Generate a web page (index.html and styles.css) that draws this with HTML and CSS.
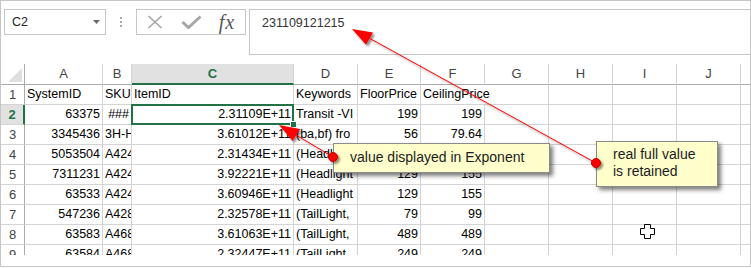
FILE: index.html
```html
<!DOCTYPE html>
<html lang="en">
<head>
  <meta charset="UTF-8" />
  <title>Exponent display</title>
  <link rel="stylesheet" href="styles.css">
</head>
<body>

  <div class="window">
    <div class="toolbar">
      <div class="namebox">
        <span>C2</span>
        <svg width="7" height="4" viewBox="0 0 7 4"><polygon points="0,0 7,0 3.5,4" fill="#6a6a6a"/></svg>
      </div>
      <div class="grip">
        <svg width="2" height="10" viewBox="0 0 2 10">
          <rect x="0" y="0" width="2" height="2" fill="#a8a8a8"/>
          <rect x="0" y="4" width="2" height="2" fill="#a8a8a8"/>
          <rect x="0" y="8" width="2" height="2" fill="#a8a8a8"/>
        </svg>
      </div>
      <div class="fxbtns">
        <div class="slot">
          <svg width="16" height="14" viewBox="0 0 16 14"><path d="M1.5 1 L14.5 13 M14.5 1 L1.5 13" stroke="#a6a6a6" stroke-width="1.7" fill="none"/></svg>
        </div>
        <div class="slot">
          <svg width="21" height="14" viewBox="0 0 21 14"><polyline points="1.5,7 7.5,12.5 19.5,1.5" stroke="#a6a6a6" stroke-width="3" fill="none"/></svg>
        </div>
        <div class="slot"><span class="fx">fx</span></div>
      </div>
      <div class="formula">231109121215</div>
    </div>

    <div class="sheet">
      <div class="corner"></div><div class="ch">A</div><div class="ch">B</div><div class="ch on">C</div><div class="ch">D</div><div class="ch">E</div><div class="ch">F</div><div class="ch">G</div><div class="ch">H</div><div class="ch">I</div><div class="ch">J</div><div class="ch"></div>

      <div class="rh">1</div><div>SystemID</div><div>SKU</div><div>ItemID</div><div>Keywords</div><div>FloorPrice</div><div class="wide">CeilingPrice</div><div></div><div></div><div></div><div></div>

      <div class="rh on">2</div><div class="n">63375</div><div class="n">###</div><div class="n sel">2.31109E+11</div><div>Transit -VI</div><div class="n">199</div><div class="n">199</div><div></div><div></div><div></div><div></div><div></div>

      <div class="rh">3</div><div class="n">3345436</div><div>3H-H</div><div class="n">3.61012E+11</div><div>(ba,bf) fro</div><div class="n">56</div><div class="n">79.64</div><div></div><div></div><div></div><div></div><div></div>

      <div class="rh">4</div><div class="n">5053504</div><div>A424</div><div class="n">2.31434E+11</div><div>(Headlight</div><div class="n">129</div><div class="n">155</div><div></div><div></div><div></div><div></div><div></div>

      <div class="rh">5</div><div class="n">7311231</div><div>A424</div><div class="n">3.92221E+11</div><div>(Headlight</div><div class="n">129</div><div class="n">155</div><div></div><div></div><div></div><div></div><div></div>

      <div class="rh">6</div><div class="n">63533</div><div>A424</div><div class="n">3.60946E+11</div><div>(Headlight</div><div class="n">129</div><div class="n">155</div><div></div><div></div><div></div><div></div><div></div>

      <div class="rh">7</div><div class="n">547236</div><div>A428</div><div class="n">2.32578E+11</div><div>(TailLight,</div><div class="n">79</div><div class="n">99</div><div></div><div></div><div></div><div></div><div></div>

      <div class="rh">8</div><div class="n">63583</div><div>A468</div><div class="n">3.61063E+11</div><div>(TailLight,</div><div class="n">489</div><div class="n">489</div><div></div><div></div><div></div><div></div><div></div>

      <div class="rh">9</div><div class="n">63584</div><div>A468</div><div class="n">2.32447E+11</div><div>(TailLight,</div><div class="n">249</div><div class="n">249</div><div></div><div></div><div></div><div></div><div></div>
    </div>

    <div class="callout callout-exp">value displayed in Exponent</div>
    <div class="callout callout-real">real full value<br>is retained</div>

    <!-- arrows, dots and mouse pointer drawn over the sheet -->
    <svg class="marks" width="751" height="267" viewBox="0 0 751 267">
      <defs>
        <filter id="shadow" filterUnits="userSpaceOnUse" x="0" y="0" width="751" height="267">
          <feDropShadow dx="2" dy="2" stdDeviation="1" flood-color="#000" flood-opacity="0.45"/>
        </filter>
      </defs>
      <g filter="url(#shadow)">
        <line x1="596" y1="163" x2="369" y2="38" stroke="#ff0000" stroke-width="1"/>
        <polygon points="352,29 373,32.5 366,44.7" fill="#ff0000"/>
        <line x1="333" y1="157" x2="296" y2="135" stroke="#ff0000" stroke-width="1"/>
        <polygon points="279,125 300,129 292.6,141" fill="#ff0000"/>
        <circle cx="596" cy="163" r="4.5" fill="#ff0000" stroke="#c00000"/>
        <circle cx="333" cy="157" r="4.5" fill="#ff0000" stroke="#c00000"/>
      </g>
      <polygon points="644.5,224.5 650.5,224.5 650.5,228.5 654.5,228.5 654.5,234.5 650.5,234.5 650.5,238.5 644.5,238.5 644.5,234.5 640.5,234.5 640.5,228.5 644.5,228.5" fill="#fff" stroke="#000" stroke-width="1"/>
    </svg>
  </div>

</body>
</html>
```

FILE: styles.css
```css
body {
  margin: 0;
  font-family: 'Liberation Sans', Arial, sans-serif;
  background: #fff;
}

.window {
  position: relative;
  width: 751px;
  height: 267px;
  box-sizing: border-box;
  border: 1px solid #c6c6c6;
  overflow: hidden;
  background: #fff;
}

/* formula bar row */
.toolbar {
  display: flex;
  align-items: flex-start;
  height: 63px;
  padding: 8px 0 0 3px;
  box-sizing: border-box;
}

.namebox {
  width: 102px;
  height: 26px;
  box-sizing: border-box;
  border: 1px solid #c6c6c6;
  display: flex;
  align-items: center;
  justify-content: space-between;
  padding: 0 5px 0 7px;
  font-size: 12.5px;
  color: #222;
}

.grip {
  width: 30px;
  height: 26px;
  display: flex;
  align-items: center;
  justify-content: center;
}

.fxbtns {
  width: 110px;
  height: 26px;
  box-sizing: border-box;
  border: 1px solid #c6c6c6;
  display: flex;
}

.fxbtns .slot {
  width: 36px;
  display: flex;
  align-items: center;
  justify-content: center;
}

.fx {
  font-family: 'Liberation Serif', serif;
  font-style: italic;
  font-size: 20px;
  color: #555;
  letter-spacing: 1px;
}

.formula {
  flex: 1;
  height: 46px;
  box-sizing: border-box;
  border: 1px solid #c6c6c6;
  border-right: none;
  margin-left: 3px;
  padding: 5px 12px;
  font-size: 12.5px;
  line-height: 16px;
  color: #333;
}

/* worksheet grid */
.sheet {
  display: grid;
  grid-template-columns: 24px 78px 29px 162px 64px 63px 64px 64px 64px 64px 64px 40px;
  grid-template-rows: 21px;
  grid-auto-rows: 20px;
  width: 749px;
  height: 191px;
  overflow: hidden;
  font-size: 12.5px;
  color: #000;
}

.sheet > div {
  box-sizing: border-box;
  border-right: 1px solid #d4d4d4;
  border-bottom: 1px solid #d4d4d4;
  white-space: nowrap;
  overflow: hidden;
  padding: 0 2px;
  line-height: 19px;
}

.sheet .ch {
  text-align: center;
  color: #444;
  font-size: 13px;
  line-height: 20px;
  border-bottom-color: #ababab;
}

.sheet .rh {
  text-align: center;
  color: #444;
  font-size: 13px;
  border-right-color: #ababab;
}

.sheet .n {
  text-align: right;
}

.sheet .wide {
  grid-column: span 2;
}

.sheet .corner {
  position: relative;
  border-right-color: #ababab;
  border-bottom-color: #ababab;
}

.corner::after {
  content: "";
  position: absolute;
  right: 2px;
  bottom: 2px;
  border-left: 14px solid transparent;
  border-bottom: 14px solid #dfdfdf;
}

.sheet .on {
  background: #e1e1e1;
  color: #217346;
  font-weight: bold;
}

.sheet .ch.on {
  border-bottom: 2px solid #217346;
}

.sheet .rh.on {
  border-right: 2px solid #217346;
}

.sheet .sel {
  position: relative;
  overflow: visible;
}

.sel::before {
  content: "";
  position: absolute;
  left: -1px;
  top: -1px;
  right: -1px;
  bottom: -1px;
  border: 2px solid #217346;
  z-index: 1;
}

.sel::after {
  content: "";
  position: absolute;
  right: -4px;
  bottom: -4px;
  width: 5px;
  height: 5px;
  background: #217346;
  border: 1px solid #fff;
  z-index: 2;
}

/* annotations */
.callout {
  position: absolute;
  z-index: 2;
  box-sizing: border-box;
  background: #ffffcc;
  border: 1px solid #8a8a8a;
  box-shadow: 3px 3px 4px rgba(0, 0, 0, 0.5);
  font-size: 14px;
  line-height: 17px;
  color: #1c1c1c;
  padding-left: 16px;
}

.callout-exp {
  left: 332px;
  top: 142px;
  width: 217px;
  height: 30px;
  padding-top: 5px;
}

.callout-real {
  left: 595px;
  top: 140px;
  width: 122px;
  height: 46px;
  padding-top: 4px;
}

.marks {
  position: absolute;
  left: -1px;
  top: -1px;
  z-index: 3;
  pointer-events: none;
}
```
